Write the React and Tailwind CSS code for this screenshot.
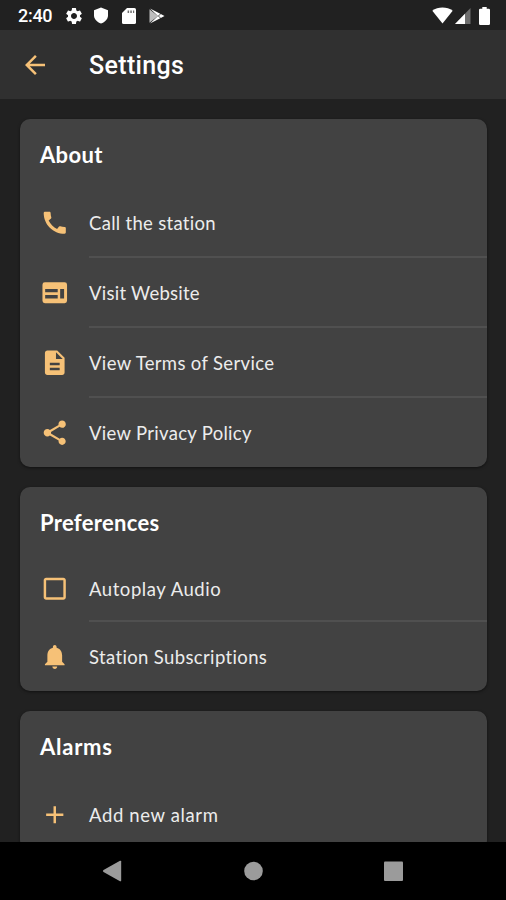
import {
  MdAdd,
  MdArrowBack,
  MdCall,
  MdCheckBoxOutlineBlank,
  MdDescription,
  MdNotifications,
  MdSettings,
  MdShare,
} from "react-icons/md";

// ── Status bar icons ──────────────────────────────────────────────────────────
const IconShield = () => (
  <svg width="14" height="17" viewBox="0 0 14 17" fill="currentColor">
    <path d="M7 .5 14 3.300v5c0 3.800-3 6.900-7 8.200C3 15.200 0 12.100 0 8.300v-5L7 .5Z" />
  </svg>
);
const IconSdCard = () => (
  <svg width="14" height="16" viewBox="0 0 14 16">
    <path d="M5 0h7.400A1.600 1.600 0 0 1 14 1.600v12.800a1.600 1.600 0 0 1-1.600 1.600H1.600A1.600 1.600 0 0 1 0 14.400V5l5-5Z" fill="#fff" />
    <path d="M5.600 2.500h1.500v2.500H5.600ZM8.300 2.500h1.500v2.500H8.300ZM11 2.500h1.200v2.500H11Z" fill="#6e6e6e" />
  </svg>
);
const IconPlay = () => (
  <svg width="16" height="16" viewBox="0 0 16 16">
    <path d="M.5 1.200 9 8 .5 14.800V1.200Z" fill="#bdbdbd" />
    <path d="M1 .6 11.300 5.800 9 8 1 .6ZM1 15.400l10.300-5.200L9 8l-8 7.400Z" fill="#fff" />
    <path d="m11.800 6 3.700 2-3.700 2-2-2 2-2Z" fill="#fff" />
  </svg>
);
const IconWifi = () => (
  <svg width="21" height="17" viewBox="0 0 21 17" fill="currentColor">
    <path d="M10.500 16.500.3 3.700C3.200 1.500 6.700.4 10.500.4s7.300 1.100 10.200 3.300L10.500 16.500Z" />
  </svg>
);
const IconSignal = () => (
  <svg width="16" height="16" viewBox="0 0 16 16" fill="currentColor">
    <path d="M15.500 0v16H0L15.500 0Z" opacity=".35" />
    <path d="M10 5.700V16H0L10 5.700Z" />
  </svg>
);
const IconBattery = () => (
  <svg width="11" height="18" viewBox="0 0 11 18" fill="currentColor">
    <path d="M3.300 0h4.400v1.800h2A1.300 1.300 0 0 1 11 3.100v13.600A1.300 1.300 0 0 1 9.700 18H1.300A1.300 1.300 0 0 1 0 16.700V3.100a1.300 1.300 0 0 1 1.300-1.300h2V0Z" />
  </svg>
);

// Browser window with two text bars and a side column
const IconWeb = ({ size }) => (
  <svg width={size} height={size} viewBox="0 0 24 24" fill="currentColor">
    <path fillRule="evenodd" d="M4 3.500h16a2 2 0 0 1 2 2v13a2 2 0 0 1-2 2H4a2 2 0 0 1-2-2v-13a2 2 0 0 1 2-2ZM4.200 9v2.600h10.200V9H4.200Zm0 4.800v2.800h10.200v-2.800H4.200ZM16.400 9v7.600h3.200V9h-3.200Z" />
  </svg>
);

const SECTIONS = [
  {
    title: "About",
    titleClass: "tracking-[0.35px]",
    rows: [
      { icon: MdCall, label: "Call the station", height: "h-[71px]", tracking: "tracking-[0.3px]" },
      { icon: IconWeb, label: "Visit Website", height: "h-[70px]", tracking: "tracking-[0.25px]" },
      { icon: MdDescription, label: "View Terms of Service", height: "h-[70px]", tracking: "tracking-[0.34px]" },
      { icon: MdShare, label: "View Privacy Policy", height: "h-[69px]", tracking: "tracking-[0.3px]" },
    ],
  },
  {
    title: "Preferences",
    titleClass: "tracking-[0.3px]",
    rows: [
      { icon: MdCheckBoxOutlineBlank, label: "Autoplay Audio", height: "h-[67px]", tracking: "tracking-[0.56px]" },
      { icon: MdNotifications, label: "Station Subscriptions", height: "h-[69px]", tracking: "tracking-[0.36px]" },
    ],
  },
  {
    title: "Alarms",
    titleClass: "tracking-[0.75px]",
    rows: [{ icon: MdAdd, label: "Add new alarm", height: "h-[71px]", tracking: "tracking-[0.63px]" }],
  },
];

function StatusBar() {
  return (
    <div className="h-[30px] shrink-0 flex items-center justify-between pl-[18px] pr-4 pt-px text-white">
      <div className="flex items-center">
        <span className="w-[46px] pt-px font-['Roboto',sans-serif] text-[18px] font-medium leading-none tracking-[-0.3px]">2:40</span>
        <MdSettings size={20} />
        <div className="ml-[10px]"><IconShield /></div>
        <div className="ml-[14px]"><IconSdCard /></div>
        <div className="ml-[13px]"><IconPlay /></div>
      </div>
      <div className="flex items-center">
        <IconWifi />
        <div className="ml-[2px]"><IconSignal /></div>
        <div className="ml-[8px]"><IconBattery /></div>
      </div>
    </div>
  );
}

function Row({ icon: Icon, label, height, tracking, divided }) {
  return (
    <div className={`${height} flex pl-5`}>
      <div className="w-[49px] flex items-center text-[#f6c177]">
        <Icon size={29.5} />
      </div>
      <div className={`flex-1 flex items-center pt-[3px] border-b-2 ${divided ? "border-[#505050]" : "border-transparent"}`}>
        <span className={`text-[18.500px] leading-none whitespace-nowrap text-[#ececec] ${tracking}`}>{label}</span>
      </div>
    </div>
  );
}

function Section({ title, titleClass, rows }) {
  return (
    <section className="shrink-0 rounded-[10px] bg-[#424242] shadow-[0_1px_3px_rgba(0,0,0,0.5)]">
      <h2 className="h-[68px] pl-5 pt-[25px] text-[22px] font-bold leading-none text-white">
        <span className={titleClass}>{title}</span>
      </h2>
      {rows.map((row, i) => (
        <Row key={row.label} {...row} divided={i < rows.length - 1} />
      ))}
    </section>
  );
}

function NavBar() {
  return (
    <div className="h-[58px] shrink-0 bg-black text-[#9b9b9b]">
      <svg width="506" height="58" viewBox="0 0 506 58" fill="currentColor">
        <path d="M103.500 28 120 18.800q1.200-.5 1.200.8v18.800q0 1.300-1.200.8L103.500 30q-1.300-1 0-2Z" />
        <circle cx="253.500" cy="29" r="9.300" />
        <rect x="384" y="19.500" width="19" height="19.500" rx="1" />
      </svg>
    </div>
  );
}

export default function App() {
  return (
    <div className="w-[506px] h-[900px] overflow-hidden flex flex-col bg-[#212121] font-['Lato',sans-serif]">
      <StatusBar />
      <header className="h-[69px] shrink-0 flex items-center pl-5 bg-[#303030]">
        <div className="w-[69px] text-[#f6c177]">
          <MdArrowBack size={30} />
        </div>
        <h1 className="pt-[2px] font-['Roboto',sans-serif] text-[25px] font-medium leading-none tracking-[0.35px] text-white">Settings</h1>
      </header>
      <main className="flex-1 min-h-0 overflow-hidden flex flex-col gap-5 pt-5 pl-5 pr-[19px]">
        {SECTIONS.map((section) => (
          <Section key={section.title} {...section} />
        ))}
      </main>
      <NavBar />
    </div>
  );
}
